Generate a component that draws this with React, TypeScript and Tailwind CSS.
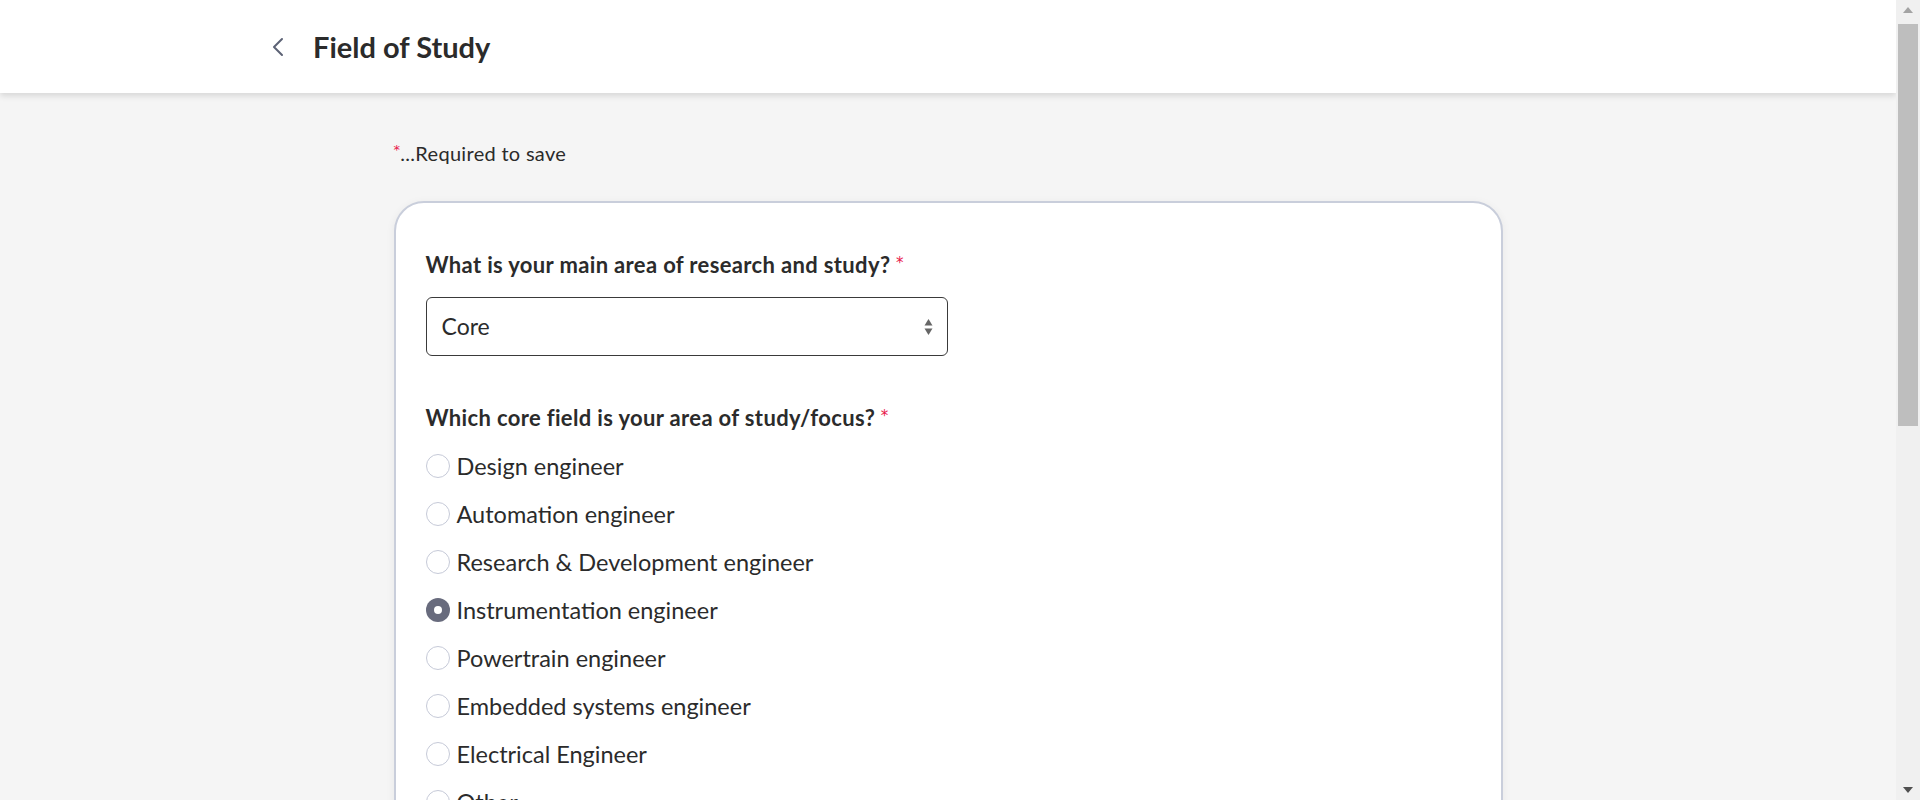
import { useState } from "react";

const options = [
  "Design engineer",
  "Automation engineer",
  "Research & Development engineer",
  "Instrumentation engineer",
  "Powertrain engineer",
  "Embedded systems engineer",
  "Electrical Engineer",
  "Other",
];

function Radio({ checked }: { checked: boolean }) {
  if (checked) {
    return (
      <span className="flex h-[24px] w-[24px] shrink-0 items-center justify-center rounded-full bg-[#686b7d]">
        <span className="h-[8px] w-[8px] rounded-full bg-white" />
      </span>
    );
  }
  return <span className="h-[24px] w-[24px] shrink-0 rounded-full border border-[#c6cad8] bg-white" />;
}

function Star({ className = "" }: { className?: string }) {
  return <span className={`relative align-top font-['DejaVu_Sans'] font-normal leading-none text-[#e8174a] ${className}`}>*</span>;
}

function Scrollbar() {
  return (
    <div className="flex h-full w-[24px] shrink-0 flex-col items-center bg-[#f0f0f0]">
      <div className="flex h-[20px] w-full items-center justify-center">
        <svg width="10" height="6" viewBox="0 0 10 6">
          <path d="M5 0 L10 6 L0 6 Z" fill="#a3a3a3" />
        </svg>
      </div>
      <div className="mt-[4px] h-[402px] w-[20px] bg-[#bebebe]" />
      <div className="flex-1" />
      <div className="flex h-[20px] w-full items-center justify-center">
        <svg width="10" height="6" viewBox="0 0 10 6">
          <path d="M0 0 L10 0 L5 6 Z" fill="#505050" />
        </svg>
      </div>
    </div>
  );
}

export default function App() {
  const [area] = useState("Core");
  const [field, setField] = useState("Instrumentation engineer");

  return (
    <div className="flex h-screen overflow-hidden bg-[#f5f5f5] text-[#2b2b2b]" style={{ fontFamily: "Lato, 'Open Sans', sans-serif" }}>
      <div className="min-w-0 flex-1 overflow-hidden">
        <header className="flex h-[93px] items-center bg-white pl-[266px] shadow-[0_3px_6px_rgba(0,0,0,0.12)]">
          <button className="flex h-[30px] w-[24px] items-center justify-center">
            <svg width="14" height="20" viewBox="0 0 14 20" fill="none">
              <path d="M11 2 L3 10 L11 18" stroke="#5c6275" strokeWidth="2" strokeLinecap="round" strokeLinejoin="round" />
            </svg>
          </button>
          <h1 className="ml-[23px] text-[29px] font-bold leading-[34px] text-[#2b2b2b]">Field of Study</h1>
        </header>

        <main className="mx-auto w-[1109px] pt-[48px] pb-[60px]">
          <p className="text-[20px] leading-[24px] tracking-[0.3px]">
            <Star className="top-[2px] text-[13px]" />...Required to save
          </p>

          <div className="mt-[36px] min-h-[1200px] rounded-[30px] border-2 border-[#c9cedb] bg-white px-[30px] pt-[47px] pb-[40px] shadow-[0_2px_10px_rgba(0,0,0,0.06)]">
            <label className="block text-[22px] font-bold leading-[30px] tracking-[0.35px]">
              What is your main area of research and study? <Star className="top-[6px] text-[15px]" />
            </label>
            <div className="mt-[17px] flex h-[59px] w-[522px] items-center justify-between rounded-[6px] border border-[#3a3a3a] pl-[15px] pr-[14px]">
              <span className="text-[23px]">{area}</span>
              <svg width="9" height="18" viewBox="0 0 9 18">
                <path d="M4.5 1 L8.5 7.5 L0.5 7.5 Z" fill="#666" />
                <path d="M4.5 17 L8.5 10.5 L0.5 10.5 Z" fill="#666" />
              </svg>
            </div>

            <label className="mt-[47px] block text-[22px] font-bold leading-[30px] tracking-[0.35px]">
              Which core field is your area of study/focus? <Star className="top-[6px] text-[15px]" />
            </label>
            <div className="mt-[9px] flex flex-col">
              {options.map((o) => (
                <div key={o} className="flex h-[48px] cursor-pointer items-center gap-[7px]" onClick={() => setField(o)}>
                  <Radio checked={field === o} />
                  <span className="text-[23.5px] leading-[28px]">{o}</span>
                </div>
              ))}
            </div>
          </div>
        </main>
      </div>
      <Scrollbar />
    </div>
  );
}
